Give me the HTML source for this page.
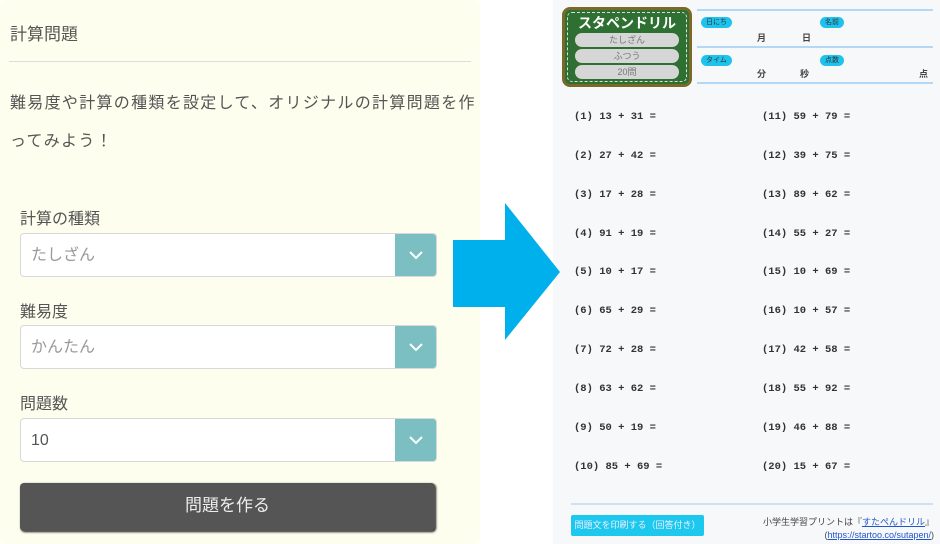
<!DOCTYPE html>
<html><head><meta charset="utf-8"><style>
*{margin:0;padding:0;box-sizing:border-box}
body{width:940px;height:544px;background:#fff;position:relative;overflow:hidden;font-family:"Liberation Sans","Noto Sans CJK JP",sans-serif;color:#555}
.left{position:absolute;left:0;top:0;width:480px;height:544px;background:#fefeee;border-radius:6px}
.t{position:absolute;left:10px;top:20px;font-size:17px}
.hr{position:absolute;left:9px;top:61px;width:462px;height:1px;background:#ddd}
.p{position:absolute;left:10px;top:85px;width:475px;font-size:16px;line-height:38px;letter-spacing:1.3px}
.lbl{position:absolute;left:20px;font-size:16px}
.sel{position:absolute;left:20px;width:417px;height:44px;background:#fff;border:1px solid #d8d8d8;border-radius:4px;overflow:hidden;font-size:16px;line-height:44px;padding-left:10px;color:#999}
.sel .b{position:absolute;right:0;top:0;width:41px;height:44px;background:#7bbfc2}
.sel svg{position:absolute;right:12px;top:15px}
.btn{position:absolute;left:20px;top:483px;width:415px;height:48px;background:#555;border-radius:4px;box-shadow:1px 1px 2px #111;color:#eee;font-size:17px;text-align:center;line-height:46px}
.right{position:absolute;left:553px;top:0;width:387px;height:544px;background:#f7f8fa}
.logo{position:absolute;left:562px;top:7px;width:130px;height:80px;background:#2e7031;border:3px solid #7a6a2a;border-radius:8px}
.logo .in{position:absolute;inset:2px;border:1px dashed #ddd;border-radius:5px}
.logo .h{position:absolute;top:3px;width:100%;text-align:center;color:#fff;font-weight:bold;font-size:14px}
.pill{position:absolute;left:10px;width:104px;height:14px;background:#d6d6d6;border-radius:7px;font-size:9px;line-height:14px;text-align:center;color:#777}
.ln{position:absolute;left:697px;width:236px;height:2px;background:#b3d7f5}
.tag{position:absolute;height:11px;background:#1dc3ec;border-radius:6px;font-size:7px;line-height:11px;padding:0 5px;color:#333}
.u{position:absolute;font-size:9px;font-weight:bold;color:#444}
.q{position:absolute;font-family:"Liberation Mono",monospace;font-weight:bold;font-size:10.5px;color:#333;white-space:pre}
.pb{position:absolute;left:571px;top:515px;width:133px;height:21px;background:#1dc8ee;border-radius:2px;color:#eef;font-size:9px;line-height:21px;text-align:center}
.ft{position:absolute;right:6px;top:516px;font-size:9px;text-align:right;line-height:13px;color:#444}
.ft a{color:#2255cc;text-decoration:underline}
</style></head><body>
<div class="left">
<div class="t">計算問題</div>
<div class="hr"></div>
<div class="p">難易度や計算の種類を設定して、オリジナルの計算問題を作ってみよう！</div>
<div class="lbl" style="top:205px">計算の種類</div>
<div class="sel" style="top:233px">たしざん<div class="b"></div><svg width="16" height="12"><path d="M2 3 L8 9 L14 3" stroke="#fff" stroke-width="2" fill="none"/></svg></div>
<div class="lbl" style="top:298px">難易度</div>
<div class="sel" style="top:325px">かんたん<div class="b"></div><svg width="16" height="12"><path d="M2 3 L8 9 L14 3" stroke="#fff" stroke-width="2" fill="none"/></svg></div>
<div class="lbl" style="top:390px">問題数</div>
<div class="sel" style="top:418px;color:#555">10<div class="b"></div><svg width="16" height="12"><path d="M2 3 L8 9 L14 3" stroke="#fff" stroke-width="2" fill="none"/></svg></div>
<div class="btn">問題を作る</div>
</div>
<div class="right"></div>
<svg style="position:absolute;left:453px;top:203px" width="108" height="138"><path d="M0 37 H52 V0 L107 69 L52 137 V104 H0 Z" fill="#00b0ec"/></svg>
<div class="logo"><div class="in"></div><div class="h">スタペンドリル</div>
<div class="pill" style="top:23px">たしざん</div><div class="pill" style="top:39px">ふつう</div><div class="pill" style="top:55px">20問</div></div>
<div class="ln" style="top:9px"></div><div class="ln" style="top:46px"></div><div class="ln" style="top:82px"></div>
<div class="tag" style="left:701px;top:17px">日にち</div><div class="tag" style="left:820px;top:17px">名前</div>
<div class="tag" style="left:701px;top:55px">タイム</div><div class="tag" style="left:820px;top:55px">点数</div>
<div class="u" style="left:757px;top:31px">月</div><div class="u" style="left:802px;top:31px">日</div>
<div class="u" style="left:757px;top:67px">分</div><div class="u" style="left:800px;top:67px">秒</div><div class="u" style="left:919px;top:67px">点</div>
<div class="q" style="left:574px;top:111px">(1) 13 + 31 =</div><div class="q" style="left:762px;top:111px">(11) 59 + 79 =</div>
<div class="q" style="left:574px;top:150px">(2) 27 + 42 =</div><div class="q" style="left:762px;top:150px">(12) 39 + 75 =</div>
<div class="q" style="left:574px;top:189px">(3) 17 + 28 =</div><div class="q" style="left:762px;top:189px">(13) 89 + 62 =</div>
<div class="q" style="left:574px;top:228px">(4) 91 + 19 =</div><div class="q" style="left:762px;top:228px">(14) 55 + 27 =</div>
<div class="q" style="left:574px;top:266px">(5) 10 + 17 =</div><div class="q" style="left:762px;top:266px">(15) 10 + 69 =</div>
<div class="q" style="left:574px;top:305px">(6) 65 + 29 =</div><div class="q" style="left:762px;top:305px">(16) 10 + 57 =</div>
<div class="q" style="left:574px;top:344px">(7) 72 + 28 =</div><div class="q" style="left:762px;top:344px">(17) 42 + 58 =</div>
<div class="q" style="left:574px;top:383px">(8) 63 + 62 =</div><div class="q" style="left:762px;top:383px">(18) 55 + 92 =</div>
<div class="q" style="left:574px;top:422px">(9) 50 + 19 =</div><div class="q" style="left:762px;top:422px">(19) 46 + 88 =</div>
<div class="q" style="left:574px;top:461px">(10) 85 + 69 =</div><div class="q" style="left:762px;top:461px">(20) 15 + 67 =</div>
<div class="ln" style="left:571px;width:362px;top:503px;background:#cfe0f0"></div>
<div class="pb">問題文を印刷する（回答付き）</div>
<div class="ft">小学生学習プリントは『<a>すたぺんドリル</a>』<br>(<a>https://startoo.co/sutapen/</a>)</div>
</body></html>
